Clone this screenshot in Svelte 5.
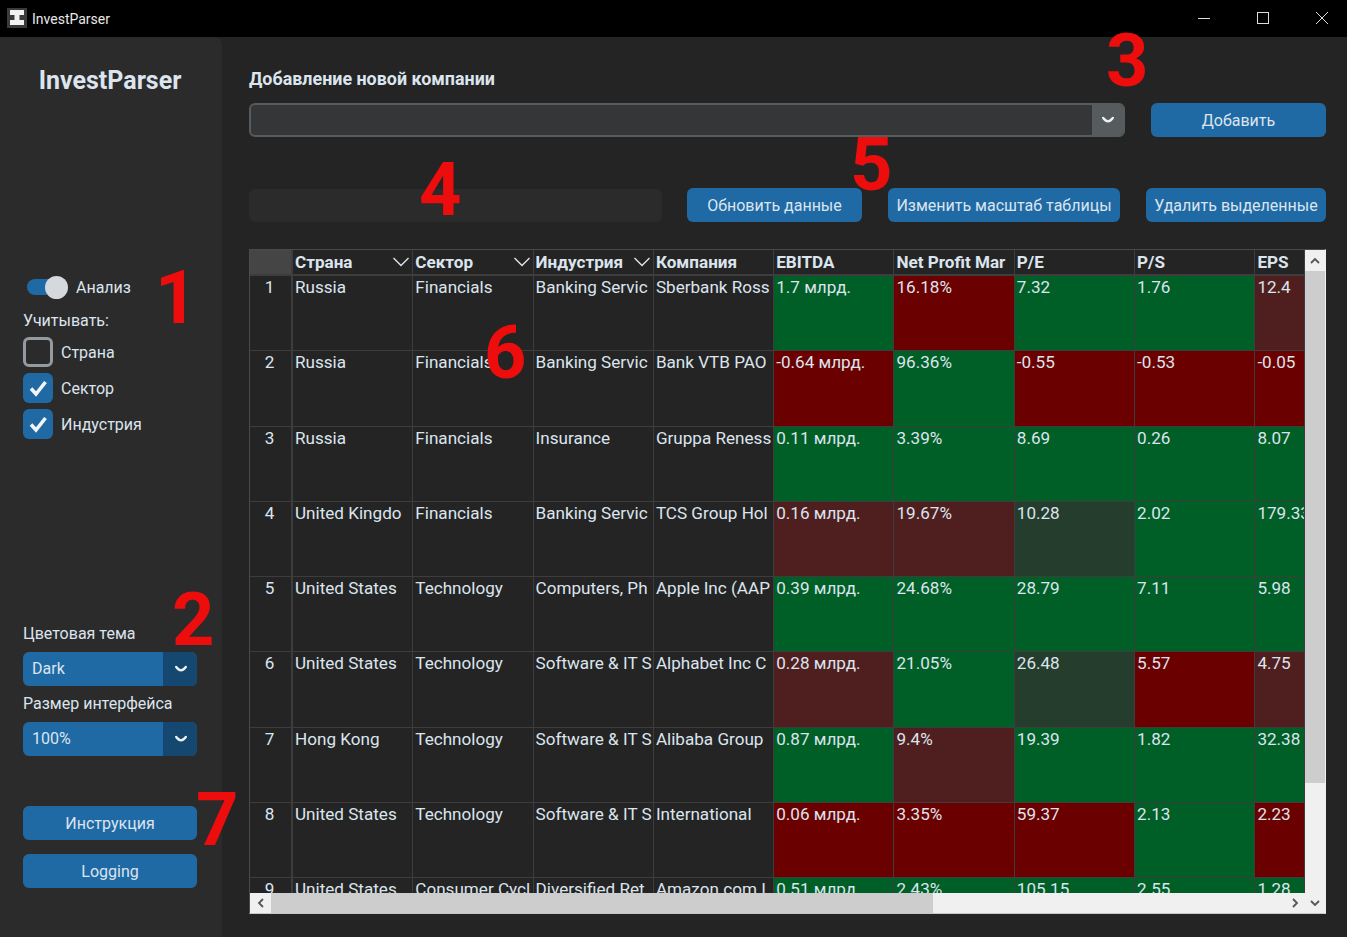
<script>
  const G = 'g', R = 'r', M = 'm', D = 'd';

  const columns = [
    { title: 'Страна', filter: true },
    { title: 'Сектор', filter: true },
    { title: 'Индустрия', filter: true },
    { title: 'Компания' },
    { title: 'EBITDA' },
    { title: 'Net Profit Mar' },
    { title: 'P/E' },
    { title: 'P/S' },
    { title: 'EPS' }
  ];

  const rows = [
    ['Russia', 'Financials', 'Banking Servic', 'Sberbank Ross', ['1.7 млрд.', G], ['16.18%', R], ['7.32', G], ['1.76', G], ['12.4', M]],
    ['Russia', 'Financials', 'Banking Servic', 'Bank VTB PAO', ['-0.64 млрд.', R], ['96.36%', G], ['-0.55', R], ['-0.53', R], ['-0.05', R]],
    ['Russia', 'Financials', 'Insurance', 'Gruppa Reness', ['0.11 млрд.', G], ['3.39%', G], ['8.69', G], ['0.26', G], ['8.07', G]],
    ['United Kingdo', 'Financials', 'Banking Servic', 'TCS Group Hol', ['0.16 млрд.', M], ['19.67%', M], ['10.28', D], ['2.02', G], ['179.33', G]],
    ['United States', 'Technology', 'Computers, Ph', 'Apple Inc (AAP', ['0.39 млрд.', G], ['24.68%', G], ['28.79', G], ['7.11', G], ['5.98', G]],
    ['United States', 'Technology', 'Software & IT S', 'Alphabet Inc C', ['0.28 млрд.', M], ['21.05%', G], ['26.48', D], ['5.57', R], ['4.75', M]],
    ['Hong Kong', 'Technology', 'Software & IT S', 'Alibaba Group', ['0.87 млрд.', G], ['9.4%', M], ['19.39', G], ['1.82', G], ['32.38', G]],
    ['United States', 'Technology', 'Software & IT S', 'International', ['0.06 млрд.', R], ['3.35%', R], ['59.37', R], ['2.13', G], ['2.23', R]],
    ['United States', 'Consumer Cycl', 'Diversified Ret', 'Amazon.com I', ['0.51 млрд.', G], ['2.43%', G], ['105.15', G], ['2.55', G], ['1.28', G]]
  ];

  const checks = [
    { label: 'Страна', on: false },
    { label: 'Сектор', on: true },
    { label: 'Индустрия', on: true }
  ];

  const marks = [
    { n: 1, x: 155, y: 258 },
    { n: 2, x: 172, y: 580 },
    { n: 3, x: 1106, y: 21 },
    { n: 4, x: 419, y: 150 },
    { n: 5, x: 850, y: 125 },
    { n: 6, x: 484, y: 313 },
    { n: 7, x: 196, y: 780 }
  ];
</script>

{#snippet chevron()}
  <svg class="chev" width="14" height="8" viewBox="0 0 14 8">
    <path d="M2.2 2 Q5 5.4 7 5.4 Q9 5.4 11.8 2" fill="none" stroke="#eef1f5" stroke-width="2.4" stroke-linecap="round" stroke-linejoin="round" />
  </svg>
{/snippet}

<div class="window">
  <header class="titlebar">
    <svg class="app-icon" width="20" height="20" viewBox="0 0 20 20">
      <rect width="20" height="20" fill="#3a3a3a" />
      <path d="M3 2 H17 V7 H12.5 V12 H17 V17 H3 V12 H7.5 V7 H3 Z" fill="#f2f2f2" />
    </svg>
    <span class="app-name">InvestParser</span>
    <div class="win-btns">
      <svg width="14" height="14" viewBox="0 0 14 14"><path d="M1 7.5 H13" stroke="#ddd" stroke-width="1" /></svg>
      <svg width="14" height="14" viewBox="0 0 14 14"><rect x="1.5" y="1.5" width="11" height="11" fill="none" stroke="#ddd" stroke-width="1" /></svg>
      <svg width="14" height="14" viewBox="0 0 14 14"><path d="M1 1 L13 13 M13 1 L1 13" stroke="#ddd" stroke-width="1" /></svg>
    </div>
  </header>

  <div class="body">
    <aside class="sidebar">
      <h1>InvestParser</h1>

      <div class="switch-row">
        <span class="switch"><span class="knob"></span></span>
        <span>Анализ</span>
      </div>
      <div class="consider">Учитывать:</div>
      <div class="checks">
        {#each checks as c}
          <div class="check-row">
            <span class="box" class:on={c.on}>
              {#if c.on}
                <svg width="30" height="30" viewBox="0 0 30 30"><path d="M8 15.5 L13 21 L22.5 9" fill="none" stroke="#f3f4f6" stroke-width="3.6" /></svg>
              {/if}
            </span>
            <span>{c.label}</span>
          </div>
        {/each}
      </div>

      <div class="field-label theme">Цветовая тема</div>
      <div class="select">
        <span class="select-value">Dark</span>
        <span class="select-arrow">{@render chevron()}</span>
      </div>
      <div class="field-label size">Размер интерфейса</div>
      <div class="select">
        <span class="select-value">100%</span>
        <span class="select-arrow">{@render chevron()}</span>
      </div>

      <button class="btn side-btn first">Инструкция</button>
      <button class="btn side-btn second">Logging</button>
    </aside>

    <main class="content">
      <div class="add-title">Добавление новой компании</div>
      <div class="add-row">
        <div class="combo">
          <span class="combo-input"></span>
          <span class="combo-arrow">{@render chevron()}</span>
        </div>
        <button class="btn add-btn">Добавить</button>
      </div>

      <div class="tools">
        <div class="progress"></div>
        <button class="btn refresh">Обновить данные</button>
        <button class="btn scale">Изменить масштаб таблицы</button>
        <button class="btn remove">Удалить выделенные</button>
      </div>

      <div class="table-frame">
        <div class="table-view">
          <div class="table">
            <div class="corner"></div>
            {#each columns as col}
              <div class="head">
                <span>{col.title}</span>
                {#if col.filter}
                  <svg class="filter" width="18" height="10" viewBox="0 0 18 10"><path d="M1.5 1 L9 8.5 L16.5 1" fill="none" stroke="#dfe3e8" stroke-width="1.4" /></svg>
                {/if}
              </div>
            {/each}
            {#each rows as row, i}
              <div class="num">{i + 1}</div>
              {#each row as cell}
                {#if Array.isArray(cell)}
                  <div class="cell {cell[1]}">{cell[0]}</div>
                {:else}
                  <div class="cell">{cell}</div>
                {/if}
              {/each}
            {/each}
          </div>
        </div>
        <div class="vbar">
          <span class="sb-btn">
            <svg width="12" height="8" viewBox="0 0 12 8"><path d="M2 6 L6 2 L10 6" fill="none" stroke="#555" stroke-width="1.8" /></svg>
          </span>
          <span class="vthumb"></span>
          <span class="sb-btn bottom">
            <svg width="12" height="8" viewBox="0 0 12 8"><path d="M2 2 L6 6 L10 2" fill="none" stroke="#555" stroke-width="1.8" /></svg>
          </span>
        </div>
        <div class="hbar">
          <span class="sb-btn h">
            <svg width="8" height="12" viewBox="0 0 8 12"><path d="M6 2 L2 6 L6 10" fill="none" stroke="#555" stroke-width="1.8" /></svg>
          </span>
          <span class="hthumb"></span>
          <span class="sb-btn h end">
            <svg width="8" height="12" viewBox="0 0 8 12"><path d="M2 2 L6 6 L2 10" fill="none" stroke="#555" stroke-width="1.8" /></svg>
          </span>
        </div>
      </div>
    </main>
  </div>

  {#each marks as m}
    <span class="mark" style="left:{m.x}px; top:{m.y}px">{m.n}</span>
  {/each}
</div>

<style>
  :global(body) {
    margin: 0;
    background: #242424;
  }

  .window {
    position: relative;
    width: 1347px;
    height: 937px;
    overflow: hidden;
    background: #242424;
    color: #dce4ee;
    font-family: Roboto, "Noto Sans", sans-serif;
    font-size: 16px;
  }

  .titlebar {
    height: 37px;
    background: #000;
    display: flex;
    align-items: center;
    padding-left: 7px;
  }

  .app-icon {
    margin-top: -1px;
  }

  .app-name {
    margin-left: 5px;
    font-size: 14px;
    color: #e8e8e8;
  }

  .win-btns {
    margin-left: auto;
    margin-top: -2px;
    display: flex;
    align-items: center;
    gap: 45px;
    padding-right: 18px;
  }

  .body {
    display: flex;
    height: 900px;
  }

  .sidebar {
    width: 222px;
    flex: none;
    background: #2b2b2b;
    border-top-right-radius: 8px;
    padding: 0 25px 0 23px;
    box-sizing: border-box;
    display: flex;
    flex-direction: column;
  }

  h1 {
    margin: 30px 0 0;
    font-size: 25px;
    line-height: 28px;
    font-weight: 700;
    text-align: center;
  }

  .switch-row {
    margin: 179px 0 0 4px;
    display: flex;
    align-items: center;
    gap: 10px;
    height: 26px;
  }

  .switch {
    position: relative;
    width: 39px;
    height: 16px;
    border-radius: 8px;
    background: #1f6aa5;
  }

  .knob {
    position: absolute;
    right: -2px;
    top: -3.5px;
    width: 23px;
    height: 23px;
    border-radius: 50%;
    background: #d5d9de;
  }

  .consider {
    margin-top: 11px;
    line-height: 20px;
  }

  .checks {
    margin-top: 6px;
    display: flex;
    flex-direction: column;
    gap: 6px;
  }

  .check-row {
    display: flex;
    align-items: center;
    gap: 8px;
    height: 30px;
  }

  .box {
    width: 30px;
    height: 30px;
    box-sizing: border-box;
    border-radius: 6px;
    border: 3px solid #949a9f;
    display: flex;
    align-items: center;
    justify-content: center;
  }

  .box.on {
    background: #1f6aa5;
    border: none;
  }

  .field-label {
    line-height: 20px;
  }

  .field-label.theme {
    margin-top: 185px;
  }

  .field-label.size {
    margin-top: 8px;
  }

  .select {
    margin-top: 8px;
    height: 34px;
    border-radius: 6px;
    overflow: hidden;
    display: flex;
    background: #1f6aa5;
  }

  .select-value {
    flex: 1;
    padding-left: 9px;
    line-height: 34px;
  }

  .select-arrow {
    width: 34px;
    background: #144870;
    display: flex;
    align-items: center;
    justify-content: center;
  }

  .chev {
    margin-left: 1px;
  }

  .combo-arrow {
    width: 31px;
    background: #565b5e;
    display: flex;
    align-items: center;
    justify-content: center;
  }

  .btn {
    height: 34px;
    border: none;
    padding: 0;
    border-radius: 6px;
    background: #1f6aa5;
    color: #dce4ee;
    font: inherit;
  }

  .side-btn {
    width: 100%;
  }

  .side-btn.first {
    margin-top: 50px;
  }

  .side-btn.second {
    margin-top: 14px;
  }

  .content {
    flex: 1;
    padding: 0 21px 0 27px;
    min-width: 0;
  }

  .add-title {
    margin-top: 31px;
    line-height: 22px;
    font-size: 17.9px;
    font-weight: 700;
  }

  .add-row {
    margin-top: 13px;
    display: flex;
    gap: 26px;
  }

  .combo {
    flex: 1;
    height: 34px;
    border-radius: 6px;
    border: 2px solid #565b5e;
    box-sizing: border-box;
    background: #343638;
    display: flex;
    overflow: hidden;
  }

  .combo-input {
    flex: 1;
  }

  .add-btn {
    width: 175px;
  }

  .tools {
    margin-top: 51px;
    display: flex;
    align-items: center;
  }

  .progress {
    width: 413px;
    height: 33px;
    border-radius: 6px;
    background: #2b2b2b;
  }

  .refresh {
    margin-left: 25px;
    width: 175px;
  }

  .scale {
    margin-left: 26px;
    width: 232px;
  }

  .remove {
    margin-left: 26px;
    width: 180px;
  }

  .table-frame {
    margin-top: 27px;
    width: 1077px;
    height: 665px;
    box-sizing: border-box;
    border: 1px solid #4a4a4a;
    border-right-color: #f0f0f0;
    border-bottom-color: #c8c8c8;
    background: #f0f0f0;
    display: grid;
    grid-template-columns: 1fr 20px;
    grid-template-rows: 1fr 20px;
  }

  .table-view {
    overflow: hidden;
    background: #242424;
    min-width: 0;
    min-height: 0;
    font-size: 17.1px;
  }

  .table {
    display: grid;
    grid-template-columns: 43px repeat(8, 120.3px) 50px;
    grid-template-rows: 26px repeat(9, 75.3px);
  }

  .corner {
    background: #454545;
    border-right: 2px solid #3d3d3d;
    border-bottom: 2px solid #3d3d3d;
    box-sizing: border-box;
  }

  .head {
    box-sizing: border-box;
    padding-left: 2px;
    border-right: 1px solid #3d3d3d;
    border-bottom: 2px solid #3d3d3d;
    font-weight: 700;
    line-height: 24px;
    white-space: nowrap;
    overflow: hidden;
    display: flex;
    align-items: center;
  }

  .filter {
    margin-left: auto;
    margin-right: 2px;
  }

  .num {
    box-sizing: border-box;
    text-align: center;
    line-height: 22px;
    border-right: 2px solid #3d3d3d;
    border-bottom: 1px solid #3d3d3d;
    padding-right: 2px;
  }

  .cell {
    box-sizing: border-box;
    padding-left: 2px;
    line-height: 22px;
    white-space: nowrap;
    overflow: hidden;
    border-right: 1px solid #3d3d3d;
    border-bottom: 1px solid #3d3d3d;
  }

  .g {
    background: #005f26;
  }

  .r {
    background: #6b0000;
  }

  .m {
    background: #4f1f1f;
  }

  .d {
    background: #253d2d;
  }

  .vbar {
    grid-row: 1 / 3;
    grid-column: 2;
    display: flex;
    flex-direction: column;
    background: #f0f0f0;
    position: relative;
  }

  .hbar {
    grid-row: 2;
    grid-column: 1;
    display: flex;
    background: #f0f0f0;
  }

  .sb-btn {
    width: 20px;
    height: 21px;
    flex: none;
    display: flex;
    align-items: center;
    justify-content: center;
  }

  .sb-btn.h {
    width: 21px;
    height: 20px;
  }

  .sb-btn.bottom {
    margin-top: auto;
  }

  .sb-btn.end {
    margin-left: auto;
  }

  .vthumb {
    height: 512px;
    background: #cdcdcd;
  }

  .hthumb {
    width: 662px;
    background: #cdcdcd;
  }

  .mark {
    position: absolute;
    font-weight: 700;
    font-size: 74px;
    line-height: 80px;
    color: #ee0d0d;
  }
</style>
